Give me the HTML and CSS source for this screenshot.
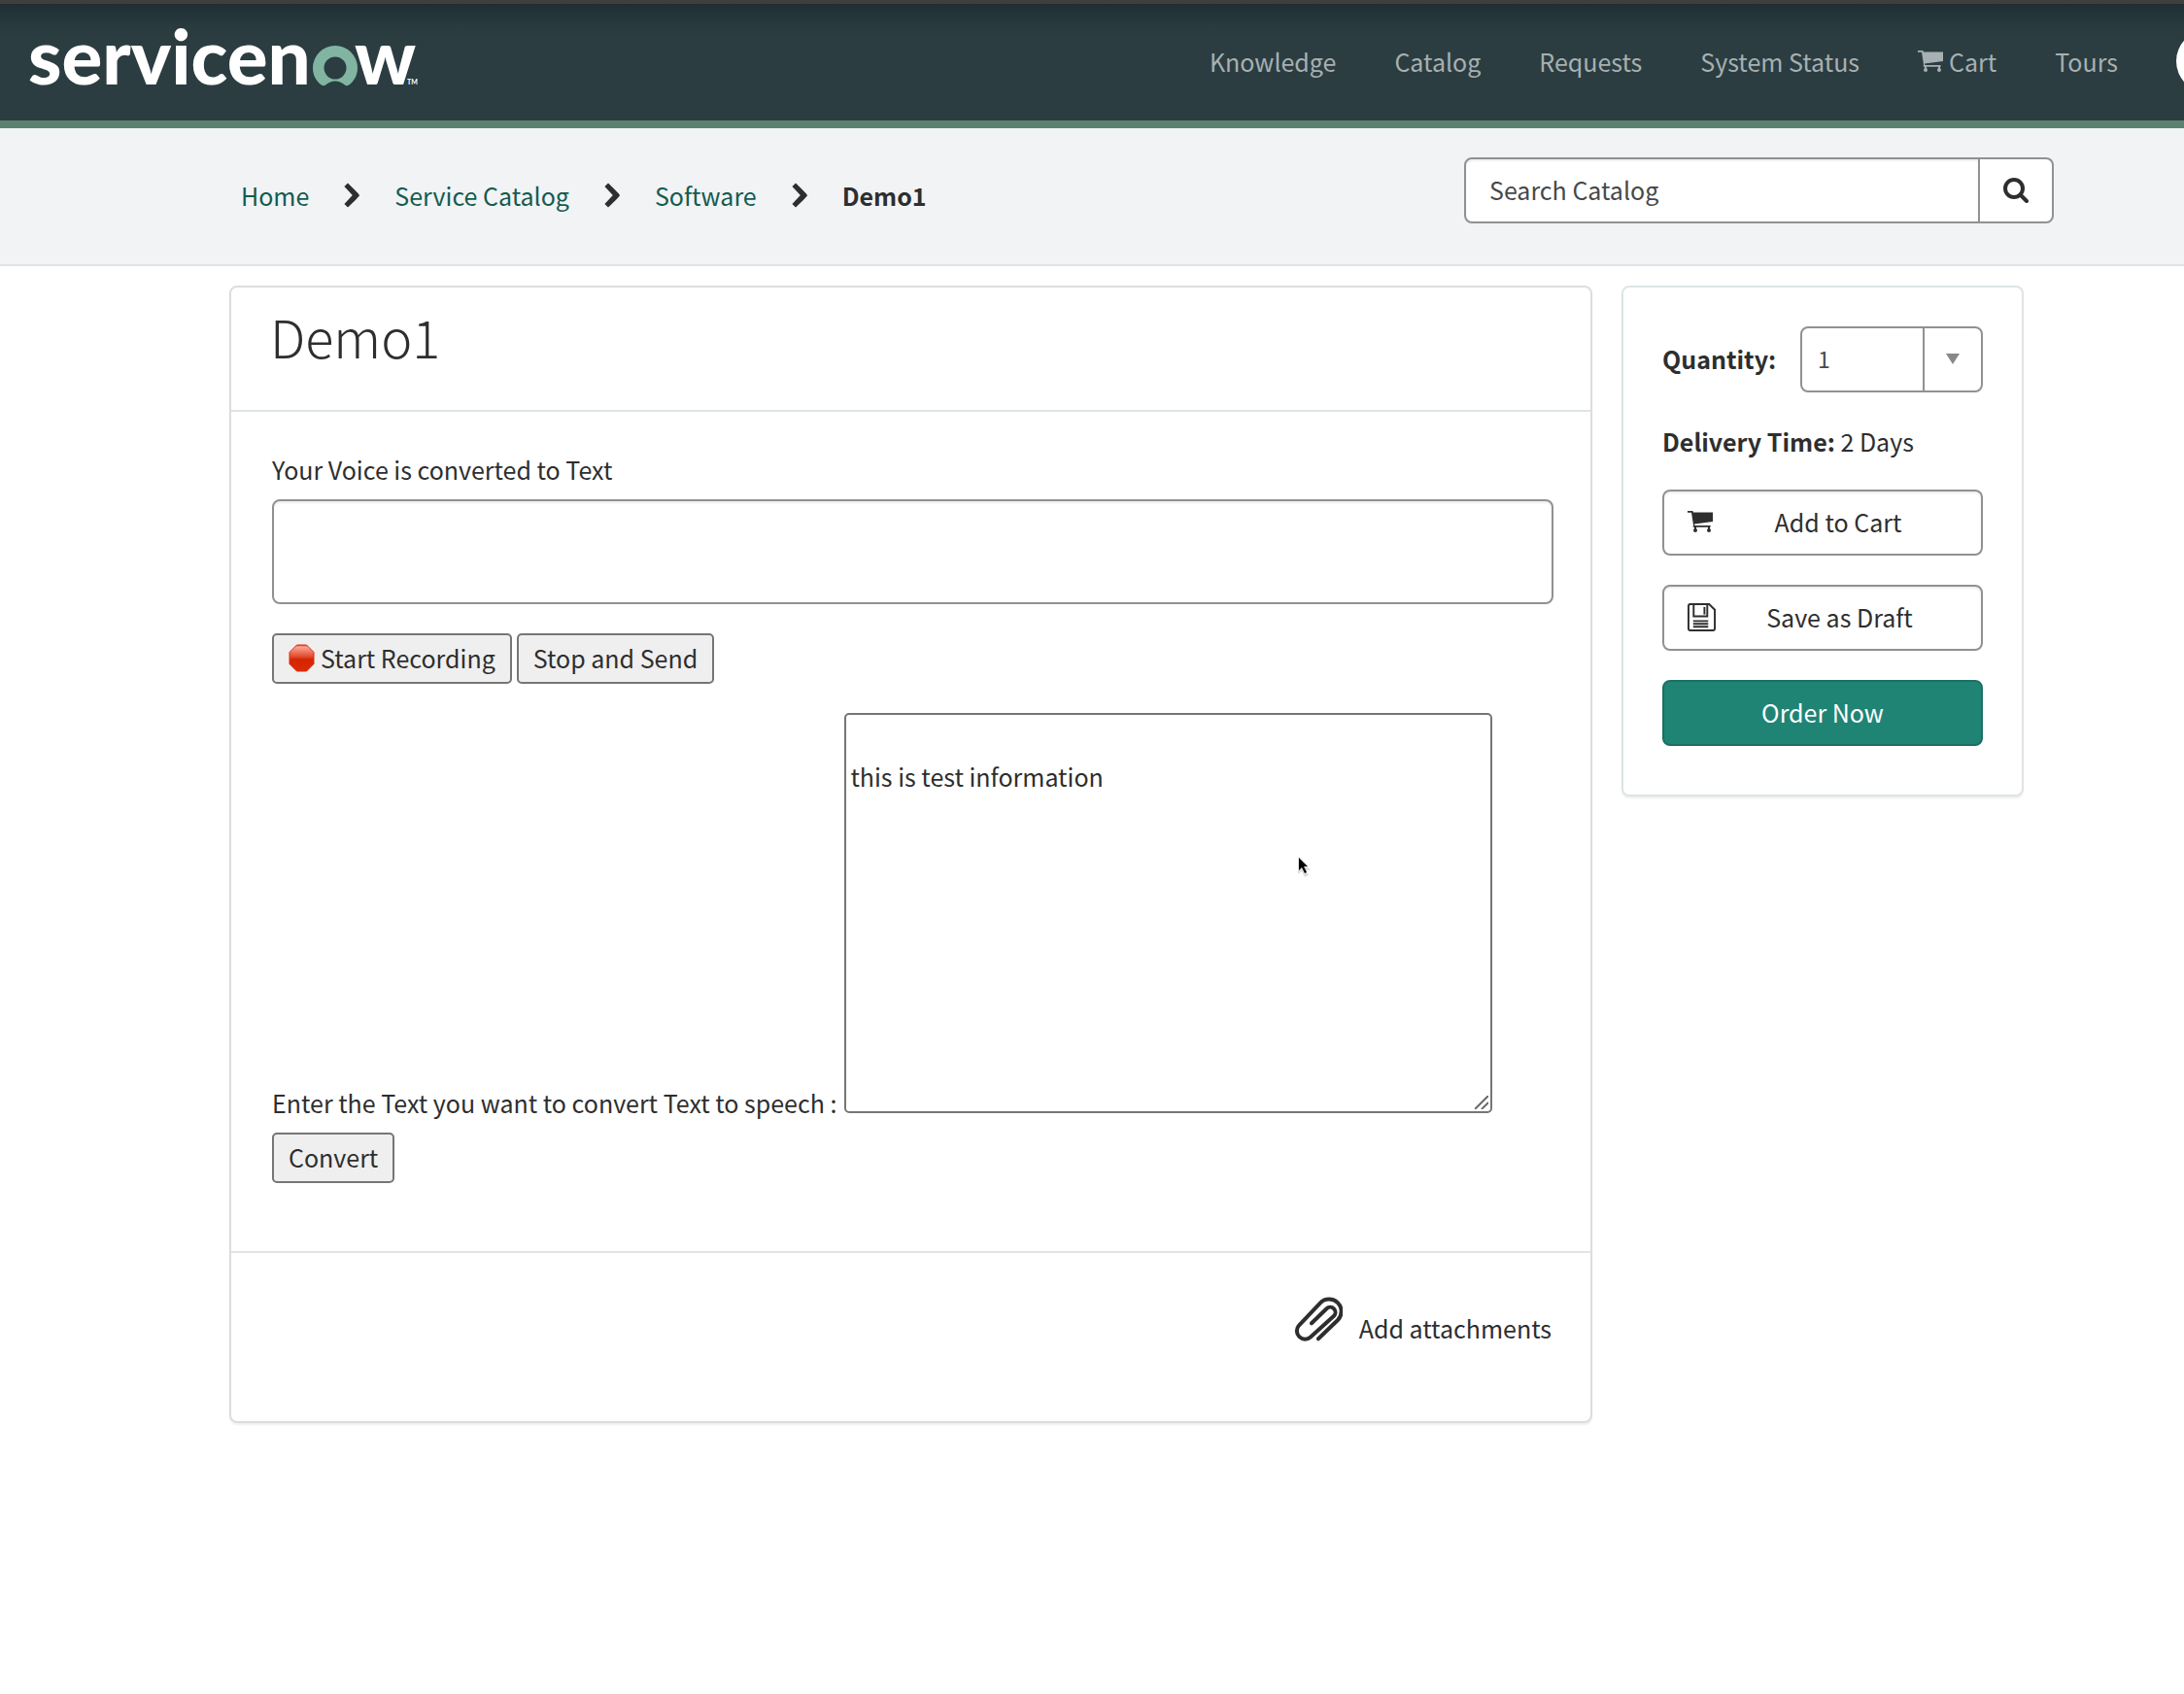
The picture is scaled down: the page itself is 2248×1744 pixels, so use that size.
FILE: index.html
```html
<!DOCTYPE html>
<html lang="en">
<head>
<meta charset="utf-8">
<title>Demo1 - Service Catalog</title>
<link rel="stylesheet" href="styles.css">
</head>
<body>
<svg class="sprite" aria-hidden="true">
  <symbol id="cart" viewBox="0 0 26 22">
    <path d="M0 0h5.4l.5 1.6H26V11L7 13.6l.4 1.4H23.6v1.7H5.6L6 14.4 4 1.7H0z"/>
    <circle cx="8" cy="20" r="2"/><circle cx="22" cy="20" r="2"/>
    <path d="M7 16h2v3H7zM21 16h2v3h-2z"/>
  </symbol>
  <symbol id="chevron" viewBox="0 0 16 26">
    <path d="M0.4 4L4 .4Q16 12 16 13T4 25.6L.4 22 8.8 13z"/>
  </symbol>
</svg>
<header class="topbar">
  <a class="brand" href="#" aria-label="servicenow home">
    <svg class="logo" viewBox="0 0 400 60">
      <text class="logo-text" x="-1" y="58">servicen</text>
      <path class="logo-ring" fill-rule="evenodd" d="M315 18A23 23 0 0 0 292 41C292 49 296 55 301 58.6q2 1.2 4 0 10-8 20 0 2 1.2 4 0C334 55 338 49 338 41A23 23 0 0 0 315 18zM315 29.5a11.5 11.5 0 1 1 0 23 11.5 11.5 0 0 1 0-23z"/>
      <text class="logo-text" x="335" y="58">w</text>
      <text class="logo-tm" x="389" y="58">TM</text>
    </svg>
  </a>
  <nav class="nav">
    <a href="#">Knowledge</a>
    <a href="#">Catalog</a>
    <a href="#">Requests</a>
    <a href="#">System Status</a>
    <a class="nav-cart" href="#"><svg class="icon-cart"><use href="#cart"/></svg>Cart</a>
    <a href="#">Tours</a>
    <span class="avatar"></span>
  </nav>
</header>

<div class="subbar">
  <nav class="crumbs" aria-label="Breadcrumb">
    <a href="#">Home</a>
    <svg class="chevron"><use href="#chevron"/></svg>
    <a href="#">Service Catalog</a>
    <svg class="chevron"><use href="#chevron"/></svg>
    <a href="#">Software</a>
    <svg class="chevron"><use href="#chevron"/></svg>
    <strong>Demo1</strong>
  </nav>
  <form class="search">
    <input type="text" placeholder="Search Catalog" aria-label="Search Catalog">
    <button type="button" aria-label="Search">
      <svg class="icon-search" viewBox="0 0 26 26"><circle cx="11" cy="11" r="9"/><path d="M17.5 17.5L24 24"/></svg>
    </button>
  </form>
</div>

<main class="page">
  <section class="card item">
    <div class="item-head"><h1>Demo1</h1></div>
    <div class="item-body">
      <label for="voice">Your Voice is converted to Text</label>
      <textarea class="voice" id="voice"></textarea>
      <div class="actions">
        <button class="plain" type="button"><svg class="stop" viewBox="0 0 27 29"><defs><linearGradient id="shine" x1="0" y1="0" x2="0" y2="1"><stop offset="0" stop-color="#f04a30"/><stop offset=".08" stop-color="#f7a595"/><stop offset=".45" stop-color="#e2492c"/><stop offset=".55" stop-color="#d42500"/><stop offset="1" stop-color="#d92b06"/></linearGradient></defs><path d="M8.5 1h10L26 8.5v12L18.500 28h-10L1 20.500v-12z" fill="url(#shine)" stroke="#e02a08"/></svg>Start Recording</button>
        <button class="plain" type="button">Stop and Send</button>
      </div>
      <div class="speech">
        <label for="speech">Enter the Text you want to convert Text to speech :</label>
        <div class="speech-box">
          <textarea id="speech">

this is test information</textarea>
          <svg class="grip" viewBox="0 0 14 14"><path d="M0 14L14 0M7 14L14 7"/></svg>
          <svg class="pointer" viewBox="0 0 16 24"><path class="pointer-shade" d="M1 1v18l4-3 3 6 4-2-3-5h5z"/><path d="M2 2v13l3-3 3 6 2-1-3-6h4z"/></svg>
        </div>
      </div>
      <button class="plain convert" type="button">Convert</button>
    </div>
    <div class="item-foot">
      <button class="attach" type="button">
        <svg class="clip" viewBox="0 0 50 52"><path d="M18 27.300L33.500 12.300A5.300 5.300 0 0 1 41 19.800L17 41.500A8.500 8.500 0 0 1 5 29.500L27 6.300A12.600 12.600 0 0 1 45 24L25 43.300"/></svg>
        Add attachments
      </button>
    </div>
  </section>

  <aside class="card order">
    <div class="quantity">
      <label for="qty">Quantity:</label>
      <div class="select">
        <select id="qty"><option>1</option><option>2</option><option>3</option></select>
        <svg class="arrow" viewBox="0 0 14 11"><path d="M0 0h14L7 11z"/></svg>
      </div>
    </div>
    <p class="delivery"><strong>Delivery Time:</strong> 2 Days</p>
    <button class="btn" type="button"><svg class="icon-cart"><use href="#cart"/></svg><span>Add to Cart</span></button>
    <button class="btn" type="button">
      <svg class="icon-save" viewBox="0 0 30 30"><path d="M2 1h21l6 6v20q0 2-2 2H3q-2 0-2-2V3q0-2 2-2zM6.500 2v12H21V2M6 19h16M6 22h16M6 25h16"/><path d="M18 4v8" /></svg>
      <span>Save as Draft</span>
    </button>
    <button class="btn primary" type="button">Order Now</button>
  </aside>
</main>
</body>
</html>
```
FILE: styles.css
```css
* { box-sizing: border-box; }

body {
  margin: 0;
  background: #fff;
  color: #2e2e2e;
  font: 25px/40px "Noto Sans CJK SC", "Noto Sans", sans-serif;
}

button, input, select, textarea { font: inherit; color: inherit; }
button { cursor: pointer; }
a { text-decoration: none; }
.sprite { display: none; }

/* header */
.topbar {
  display: flex;
  align-items: center;
  justify-content: space-between;
  height: 132px;
  padding-left: 30px;
  border-top: 4px solid #403f3f;
  border-bottom: 8px solid #5b8270;
  background: linear-gradient(#202e32, #293b3f 24px, #2b3d41 40px);
  overflow: hidden;
}
.brand { display: flex; padding-bottom: 10px; }
.logo { width: 400px; height: 60px; overflow: visible; }
.logo-text { font: 900 78px Lato, sans-serif; fill: #fff; }
.logo-tm { font: 700 7px Lato, sans-serif; fill: #fff; }
.logo-ring { fill: #81b5a1; }
.nav { display: flex; align-items: center; gap: 60px; padding-bottom: 2px; }
.nav a { color: #a7b0b2; white-space: nowrap; }
.nav-cart { display: flex; align-items: center; gap: 6px; }
.avatar {
  flex: none;
  width: 64px;
  height: 64px;
  margin-right: -56px;
  border-radius: 50%;
  background: #fff;
}
.icon-cart { width: 26px; height: 22px; fill: currentColor; }

/* breadcrumb and search */
.subbar {
  display: flex;
  justify-content: space-between;
  align-items: flex-start;
  padding: 30px 134px 42px 248px;
  border-bottom: 2px solid #dee4e7;
  background: #f1f3f5;
}
.crumbs { display: flex; align-items: center; gap: 36px; padding-top: 19px; }
.crumbs a { color: #155b4f; }
.chevron { width: 16px; height: 26px; fill: #2e2e2e; }
.search { display: flex; width: 607px; height: 68px; }
.search input {
  flex: 1;
  min-width: 0;
  padding: 0 24px 2px;
  border: 2px solid #919191;
  border-radius: 8px 0 0 8px;
  background: #fff;
  box-shadow: inset 0 2px 2px #0001;
}
.search input::placeholder { color: #484848; opacity: 1; }
.search button {
  display: flex;
  align-items: center;
  justify-content: center;
  width: 76px;
  border: 2px solid #919191;
  border-left: 0;
  border-radius: 0 8px 8px 0;
  background: #fff;
}
.icon-search { width: 26px; height: 26px; fill: none; stroke: #2e2e2e; stroke-width: 4; stroke-linecap: round; }

/* page */
.page {
  display: flex;
  align-items: flex-start;
  gap: 30px;
  padding: 20px 165px 60px 236px;
}
.card {
  border: 2px solid #ddd;
  border-radius: 8px;
  background: #fff;
  box-shadow: 0 2px 2px #0001;
}
.item { flex: 1; }
.item-head { padding: 14px 40px 40px; border-bottom: 2px solid #dee4e7; }
h1 { margin: 0; font-size: 54px; line-height: 72px; font-weight: 300; }
.item-body {
  display: flex;
  flex-direction: column;
  align-items: flex-start;
  padding: 39px 38px 70px 42px;
}
.voice {
  width: 100%;
  height: 108px;
  margin: 11px 0 30px;
  padding: 12px 24px;
  border: 2px solid #919191;
  border-radius: 8px;
  resize: none;
  box-shadow: inset 0 2px 2px #0001;
}
.actions { display: flex; gap: 5px; margin-bottom: 30px; }
.plain {
  display: flex;
  align-items: center;
  height: 52px;
  padding: 0 15px 2px;
  border: 2px solid #767676;
  border-radius: 5px;
  background: #efefef;
}
.stop { width: 27px; height: 29px; margin-right: 6px; }
.speech { display: flex; align-items: flex-end; gap: 8px; }
.speech label { line-height: 22px; }
.speech-box { position: relative; }
.speech-box textarea {
  display: block;
  width: 667px;
  height: 412px;
  padding: 3px 4px;
  border: 2px solid #767676;
  border-radius: 5px;
  resize: none;
}
.grip {
  position: absolute;
  right: 4px;
  bottom: 4px;
  width: 14px;
  height: 14px;
  fill: none;
  stroke: #6a6a6a;
  stroke-width: 2;
}
.pointer { position: absolute; left: 466px; top: 147px; width: 16px; height: 24px; }
.pointer-shade { fill: #ddd; }
.convert { margin-top: 20px; }
.item-foot {
  display: flex;
  justify-content: flex-end;
  padding: 45px 40px 76px;
  border-top: 2px solid #dee4e7;
}
.attach {
  display: flex;
  align-items: flex-end;
  gap: 17px;
  padding: 0;
  border: 0;
  background: none;
}
.clip { width: 50px; height: 52px; fill: none; stroke: #2e2e2e; stroke-width: 4; stroke-linecap: round; }

/* order panel */
.order {
  display: flex;
  flex-direction: column;
  gap: 30px;
  width: 414px;
  padding: 40px 40px 50px;
  border-color: #dee4e7;
}
.quantity { display: flex; align-items: center; justify-content: space-between; }
.quantity label { padding-bottom: 2px; font-weight: 700; }
.select { position: relative; width: 188px; }
.select select {
  display: block;
  width: 100%;
  height: 68px;
  padding: 0 16px 2px;
  border: 2px solid #919191;
  border-radius: 8px;
  background: linear-gradient(#919191, #919191) 124px 0 / 2px 100% no-repeat #fff;
  color: #484848;
  font-size: 23px;
  appearance: none;
}
.arrow { position: absolute; right: 24px; top: 28px; width: 14px; height: 11px; fill: #888; pointer-events: none; }
.delivery { margin: 0; }
.btn {
  display: flex;
  align-items: center;
  justify-content: center;
  height: 68px;
  padding: 0 18px 2px 24px;
  border: 2px solid #919191;
  border-radius: 8px;
  background: #fff;
  box-shadow: inset 0 2px 2px #0001;
}
.btn span { flex: 1; }
.icon-save { width: 29px; height: 29px; fill: none; stroke: #2e2e2e; stroke-width: 2; }
.primary { padding: 0 0 2px; border-color: #1b7062; background: #208475; color: #fff; box-shadow: none; }
```
